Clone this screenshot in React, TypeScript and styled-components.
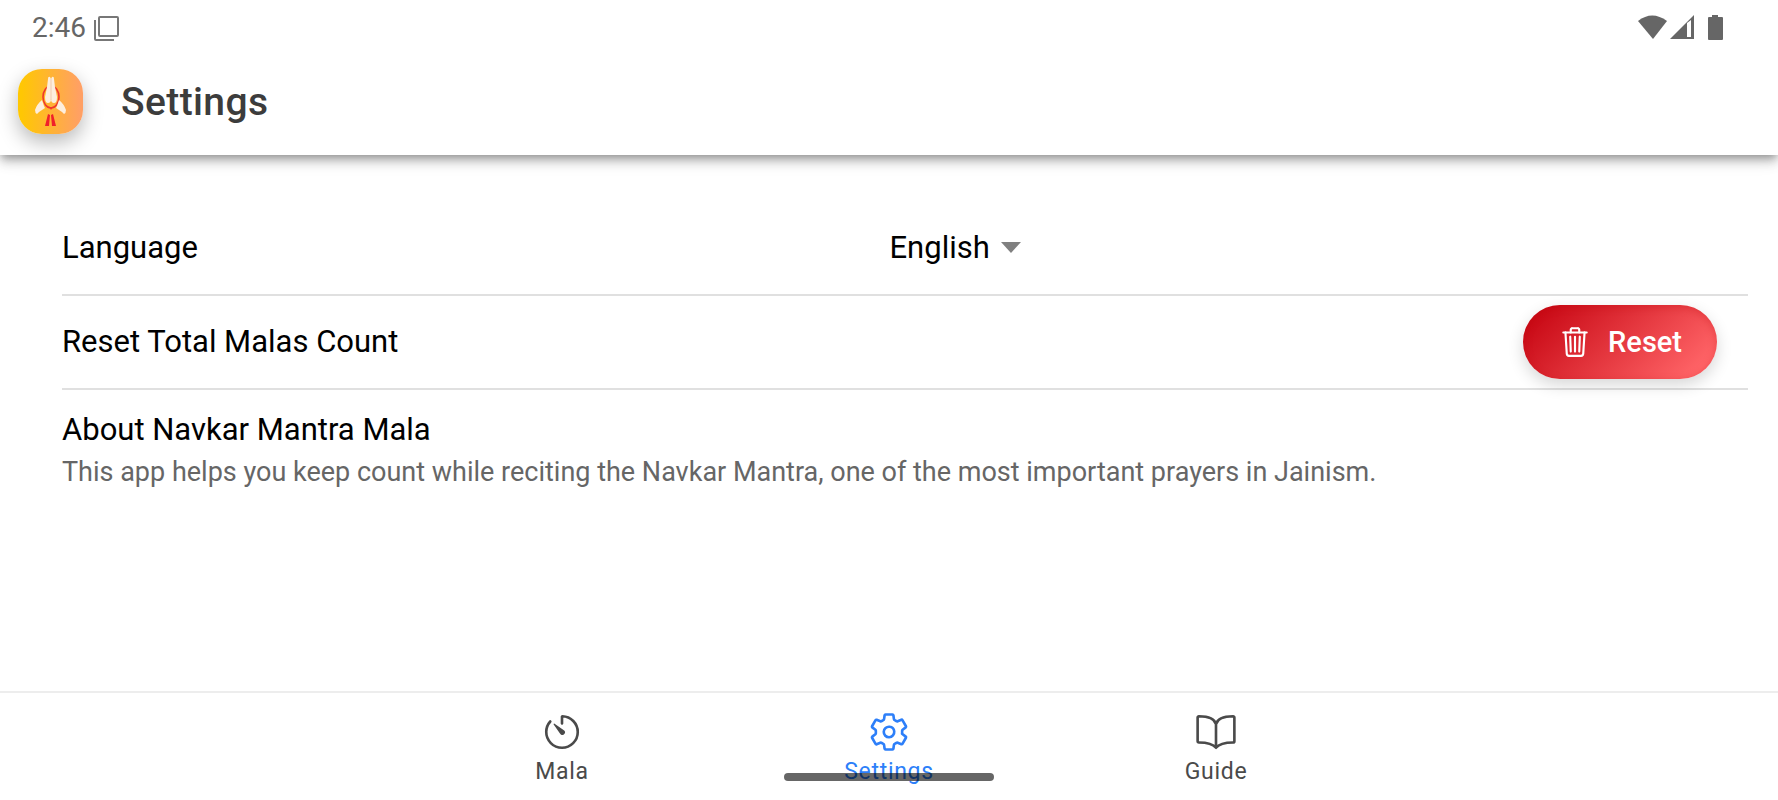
import React from "react";
import styled, { createGlobalStyle } from "styled-components";
import { IoBookOutline, IoSettingsOutline, IoTimerOutline, IoTrashOutline } from "react-icons/io5";

const GlobalStyle = createGlobalStyle`
  *, *::before, *::after { box-sizing: border-box; }
  body {
    margin: 0;
    background: #fff;
    color: #000;
    font-family: Roboto, "Liberation Sans", sans-serif;
  }
`;

const Page = styled.div`
  display: flex;
  flex-direction: column;
  min-height: 100vh;
`;

const StatusBar = styled.div`
  display: flex;
  align-items: center;
  justify-content: space-between;
  height: 55px;
  padding: 0 54px 0 32px;
  color: #666;
  font-size: 28px;
`;

const StatusGroup = styled.div`
  display: flex;
  align-items: center;
  gap: 8px;
`;

const StatusIcons = styled.svg`
  display: block;
  width: 86px;
  height: 26px;
`;

const Header = styled.header`
  box-shadow:
    0 4px 8px -2px rgba(0, 0, 0, 0.3),
    0 8px 10px rgba(0, 0, 0, 0.14),
    0 2px 20px rgba(0, 0, 0, 0.1);
  clip-path: inset(0 0 -40px 0);
`;

const Toolbar = styled.div`
  display: flex;
  align-items: flex-start;
  gap: 38px;
  height: 100px;
  padding: 14px 18px;
`;

const AppIcon = styled.svg`
  display: block;
  width: 65px;
  height: 65px;
  border-radius: 24px;
  box-shadow: 0 8px 20px rgba(0, 0, 0, 0.28);
`;

const Title = styled.h1`
  margin: 0;
  color: #3c3c3c;
  font-size: 39px;
  line-height: 66px;
  font-weight: 500;
  letter-spacing: 0.01em;
`;

const Content = styled.main`
  flex: 1;
  padding: 47px 30px 32px 62px;
`;

const Item = styled.div`
  display: flex;
  align-items: center;
  height: 94px;
  padding-right: 31px;
  border-bottom: 2px solid #e0e0e0;
`;

const ItemLabel = styled.label`
  flex: 1;
  font-size: 31px;
  line-height: 40px;
`;

const SelectWrap = styled.div`
  display: flex;
  flex: 1;
  align-items: center;
  gap: 10px;
`;

const Select = styled.select`
  appearance: none;
  padding: 0;
  border: 0;
  background: none;
  color: #000;
  font: 400 31px/40px Roboto, "Liberation Sans", sans-serif;
`;

const Caret = styled.svg`
  width: 20px;
  height: 12px;
  fill: #808080;
`;

const ResetButton = styled.button`
  display: flex;
  align-items: center;
  gap: 16px;
  height: 74px;
  padding: 0 35px;
  border: 0;
  border-radius: 37px;
  background: linear-gradient(135deg, #ca0b17 10%, #ff6467 90%);
  box-shadow:
    0 6px 16px rgba(0, 0, 0, 0.16),
    inset 0 2px 8px rgba(190, 0, 10, 0.3);
  color: #fff;
  font: 500 29px/36px Roboto, "Liberation Sans", sans-serif;
`;

const About = styled.section`
  padding-top: 20px;
`;

const AboutTitle = styled.h2`
  margin: 0;
  font-size: 31px;
  line-height: 40px;
  font-weight: 400;
`;

const AboutText = styled.p`
  margin: 4px 0 0;
  color: #666;
  font-size: 27px;
  line-height: 36px;
`;

const TabBar = styled.nav`
  position: relative;
  display: flex;
  justify-content: center;
  height: 109px;
  border-top: 2px solid #ededed;
`;

const Tab = styled.a<{ $active?: boolean }>`
  display: flex;
  flex-direction: column;
  align-items: center;
  width: 327px;
  padding-top: 18px;
  color: ${(p) => (p.$active ? "#2d7ff9" : "#4a4a4a")};
  font-size: 23px;
  line-height: 38px;
  letter-spacing: 0.03em;
  text-decoration: none;
`;

const HomeHandle = styled.div`
  position: absolute;
  bottom: 19px;
  left: 50%;
  width: 210px;
  height: 8px;
  border-radius: 4px;
  background: rgba(0, 0, 0, 0.6);
  transform: translateX(-50%);
`;

export default function App() {
  return (
    <Page>
      <GlobalStyle />
      <StatusBar>
        <StatusGroup>
          <span>2:46</span>
          <svg width="26" height="26" viewBox="0 0 26 26" fill="none" stroke="#777" strokeWidth="2">
            <rect x="5" y="2" width="19" height="19" rx="1" />
            <path d="M1 5v19q0 1 1 1h18" />
          </svg>
        </StatusGroup>
        <StatusIcons viewBox="0 0 86 26" fill="#666">
          <path d="M0 6Q14-5 29 6L15 24Z" />
          <path fillRule="evenodd" d="M32 24L56 0V24ZM49 8V22H53V5Z" />
          <path d="M74 0h6v2h4q1 0 1 1v21q0 1-1 1H71q-1 0-1-1V3q0-1 1-1h3Z" />
        </StatusIcons>
      </StatusBar>

      <Header>
        <Toolbar>
          <AppIcon viewBox="0 0 65 65" aria-hidden="true">
            <defs>
              <linearGradient id="sun" x1="0" x2="1" y1="0" y2="0">
                <stop offset="0.05" stopColor="#ffc703" />
                <stop offset="0.95" stopColor="#ffa064" />
              </linearGradient>
            </defs>
            <rect width="65" height="65" fill="url(#sun)" />
            <ellipse cx="33" cy="28" rx="8" ry="11" fill="none" stroke="#f0382c" strokeWidth="1.6" />
            <path
              d="M30 10Q30 7 32 8L33 10L34 8Q36 7 36 10L37 18L39 28Q39 34 36 34Q33 34 33 30Q33 34 30 34Q27 34 27 28L29 18Z"
              fill="#fdeedd"
            />
            <path d="M33 10V31" stroke="#ecc0a2" strokeWidth="0.8" />
            <path
              d="M24 31L26 37L27 39L21 43L19 45Q17 44 17 41Q19 35 24 31ZM41 31L39 37L38 39L44 43L46 45Q48 44 48 41Q46 35 41 31Z"
              fill="#fdeedd"
            />
            <path d="M31 38h4l-2 3Z" fill="#f0382c" />
            <path d="M30 45L32 46L31 57H27ZM35 45L38 57H34L33 46Z" fill="#f0202a" />
          </AppIcon>
          <Title>Settings</Title>
        </Toolbar>
      </Header>

      <Content>
        <Item>
          <ItemLabel htmlFor="language">Language</ItemLabel>
          <SelectWrap>
            <Select id="language" defaultValue="en">
              <option value="en">English</option>
            </Select>
            <Caret viewBox="0 0 20 12" aria-hidden="true">
              <path d="M0 0H20L10 11Z" />
            </Caret>
          </SelectWrap>
        </Item>
        <Item>
          <ItemLabel as="span">Reset Total Malas Count</ItemLabel>
          <ResetButton type="button">
            <IoTrashOutline size={34} />
            Reset
          </ResetButton>
        </Item>
        <About>
          <AboutTitle>About Navkar Mantra Mala</AboutTitle>
          <AboutText>
            This app helps you keep count while reciting the Navkar Mantra, one of the most important prayers in
            Jainism.
          </AboutText>
        </About>
      </Content>

      <TabBar>
        <Tab href="#mala">
          <IoTimerOutline size={42} />
          Mala
        </Tab>
        <Tab href="#settings" $active aria-current="page">
          <IoSettingsOutline size={42} />
          Settings
        </Tab>
        <Tab href="#guide">
          <IoBookOutline size={42} />
          Guide
        </Tab>
        <HomeHandle />
      </TabBar>
    </Page>
  );
}
